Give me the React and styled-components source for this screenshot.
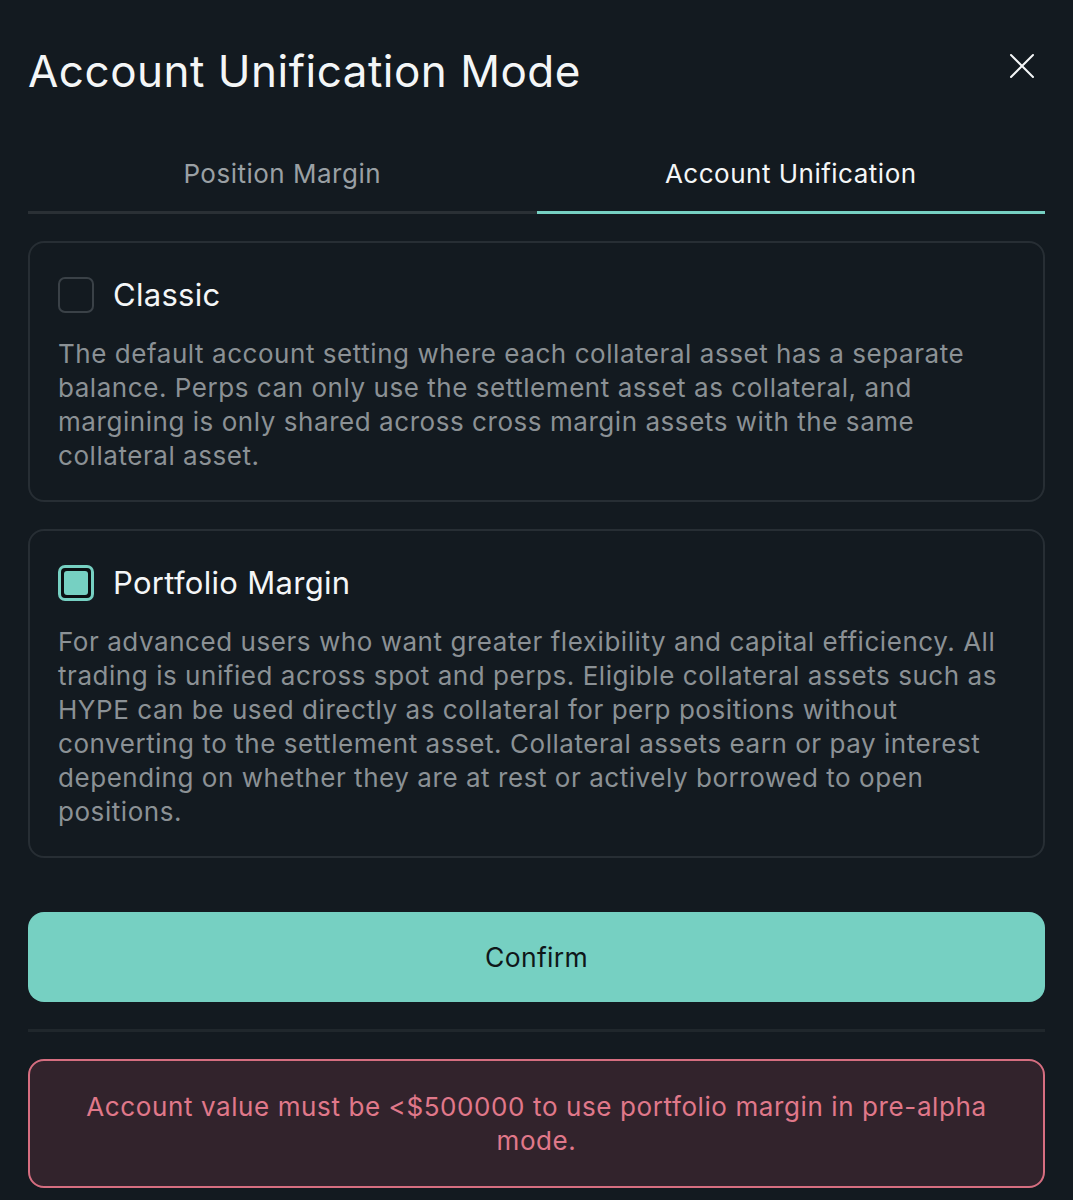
import React, { useState } from "react";
import styled, { createGlobalStyle } from "styled-components";

const GlobalStyle = createGlobalStyle`
  html, body {
    margin: 0;
    padding: 0;
    background: #131a20;
  }
  * {
    box-sizing: border-box;
  }
`;

const Modal = styled.div`
  width: 1073px;
  min-height: 1200px;
  background: #131a20;
  padding: 0 28px;
  font-family: "Inter", "Noto Sans", sans-serif;
  color: #f4f6f7;
  display: flex;
  flex-direction: column;
`;

const Header = styled.div`
  display: flex;
  justify-content: space-between;
  align-items: flex-start;
  padding-top: 43px;
  height: 158px;
`;

const Title = styled.h1`
  margin: 0;
  font-size: 44px;
  font-weight: 400;
  line-height: 56px;
  letter-spacing: 0.5px;
`;

const CloseButton = styled.button`
  background: none;
  border: none;
  padding: 0;
  margin-top: 10px;
  margin-right: 10px;
  cursor: pointer;
  color: #f4f6f7;
  display: flex;
`;

const Tabs = styled.div`
  display: grid;
  grid-template-columns: 1fr 1fr;
`;

const Tab = styled.button`
  background: none;
  border: none;
  font-family: inherit;
  font-size: 26px;
  letter-spacing: 0.5px;
  padding: 0 0 22px;
  color: ${(p) => (p.$active ? "#f4f6f7" : "#9aa0a4")};
  border-bottom: 3px solid ${(p) => (p.$active ? "#76d0c2" : "#2a3035")};
  cursor: pointer;
`;

const Options = styled.div`
  display: flex;
  flex-direction: column;
  gap: 27px;
  margin-top: 27px;
`;

const Card = styled.div`
  border: 2px solid #272e34;
  border-radius: 16px;
  padding: 34px 28px 27px;
  cursor: pointer;
`;

const CardHead = styled.div`
  display: flex;
  align-items: center;
  gap: 19px;
`;

const Box = styled.span`
  width: 36px;
  height: 36px;
  border-radius: 7px;
  border: ${(p) => (p.$checked ? "3px solid #76d0c2" : "2px solid #3a4147")};
  background: ${(p) => (p.$checked ? "#0b0f12" : "transparent")};
  padding: 3px;
  display: flex;
`;

const BoxFill = styled.span`
  flex: 1;
  border-radius: 3px;
  background: #76d0c2;
`;

const CardTitle = styled.span`
  font-size: 31px;
  line-height: 36px;
  letter-spacing: 0.3px;
  color: #f4f6f7;
`;

const CardText = styled.p`
  margin: 24px 0 0;
  font-size: 26px;
  line-height: 34px;
  color: #8b9195;
  letter-spacing: 0.55px;
`;

const ConfirmButton = styled.button`
  margin-top: 54px;
  height: 90px;
  border: none;
  border-radius: 16px;
  background: #76d0c2;
  color: #0f1719;
  font-family: inherit;
  font-size: 26.5px;
  letter-spacing: 0.3px;
  cursor: pointer;
`;

const Divider = styled.hr`
  margin: 27px 0 0;
  border: none;
  height: 3px;
  background: #20272c;
`;

const ErrorBox = styled.div`
  margin-top: 27px;
  border: 2px solid #d66e80;
  border-radius: 16px;
  background: #32232c;
  color: #e0788a;
  font-size: 26px;
  line-height: 34px;
  letter-spacing: 0.6px;
  text-align: center;
  padding: 29px 50px 28px;
`;

const options = [
  {
    id: "classic",
    title: "Classic",
    text: "The default account setting where each collateral asset has a separate balance. Perps can only use the settlement asset as collateral, and margining is only shared across cross margin assets with the same collateral asset.",
  },
  {
    id: "portfolio",
    title: "Portfolio Margin",
    text: "For advanced users who want greater flexibility and capital efficiency. All trading is unified across spot and perps. Eligible collateral assets such as HYPE can be used directly as collateral for perp positions without converting to the settlement asset. Collateral assets earn or pay interest depending on whether they are at rest or actively borrowed to open positions.",
  },
];

const App = () => {
  const [tab, setTab] = useState("unification");
  const [mode, setMode] = useState("portfolio");

  return (
    <>
      <GlobalStyle />
      <Modal>
        <Header>
          <Title>Account Unification Mode</Title>
          <CloseButton aria-label="Close">
            <svg width="26" height="26" viewBox="0 0 26 26" fill="none" stroke="currentColor" strokeWidth="2" strokeLinecap="round">
              <path d="M2 2L24 24M24 2L2 24" />
            </svg>
          </CloseButton>
        </Header>
        <Tabs>
          <Tab $active={tab === "position"} onClick={() => setTab("position")}>
            Position Margin
          </Tab>
          <Tab $active={tab === "unification"} onClick={() => setTab("unification")}>
            Account Unification
          </Tab>
        </Tabs>
        <Options>
          {options.map((o) => (
            <Card key={o.id} onClick={() => setMode(o.id)}>
              <CardHead>
                <Box $checked={mode === o.id}>{mode === o.id && <BoxFill />}</Box>
                <CardTitle>{o.title}</CardTitle>
              </CardHead>
              <CardText>{o.text}</CardText>
            </Card>
          ))}
        </Options>
        <ConfirmButton>Confirm</ConfirmButton>
        <Divider />
        <ErrorBox>
          Account value must be &lt;$500000 to use portfolio margin in pre-alpha mode.
        </ErrorBox>
      </Modal>
    </>
  );
};

export default App;
